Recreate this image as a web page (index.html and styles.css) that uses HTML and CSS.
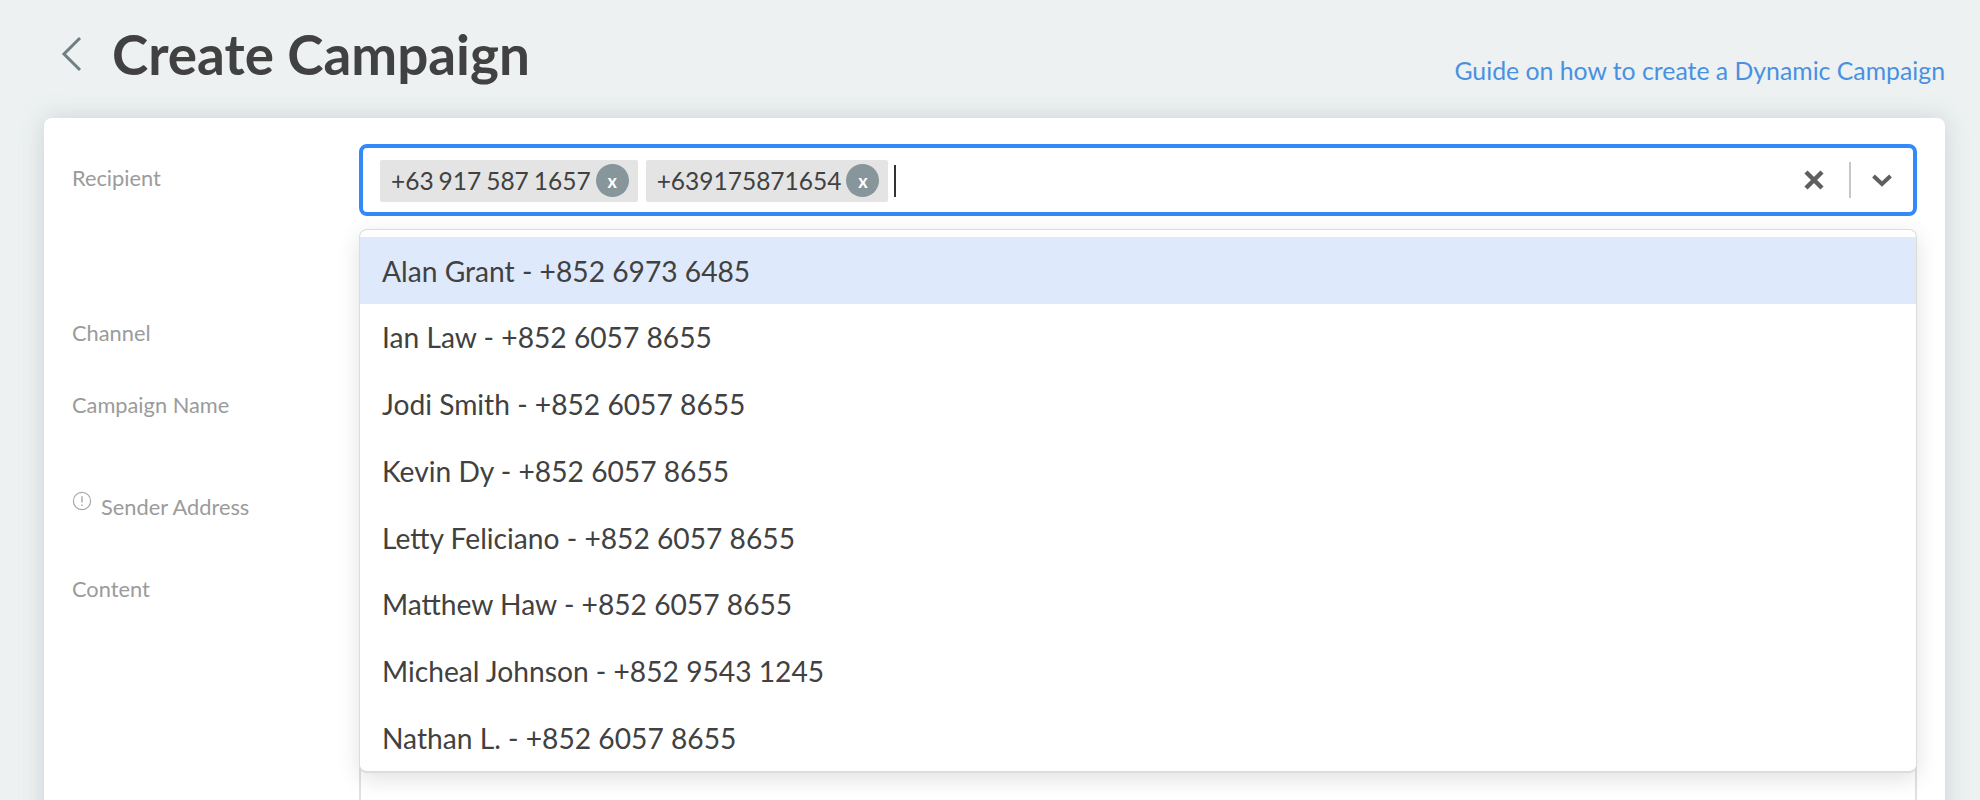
FILE: index.html
```html
<!DOCTYPE html>
<html lang="en">
<head>
<meta charset="utf-8">
<title>Create Campaign</title>
<link rel="stylesheet" href="styles.css">
</head>
<body>
<div class="page">
  <header class="head">
    <div class="head-left">
      <svg class="back" width="24" height="36" viewBox="0 0 24 36"><path d="M20 2 L4 18 L20 34" fill="none" stroke="#6f7f84" stroke-width="3"/></svg>
      <h1 class="title">Create Campaign</h1>
    </div>
    <a class="guide">Guide on how to create a Dynamic Campaign</a>
  </header>
  <main class="card">
    <div class="row row-recipient">
      <div class="label">Recipient</div>
      <div class="field">
        <div class="select">
          <div class="chips">
            <span class="chip">+63 917 587 1657<span class="chip-x">x</span></span>
            <span class="chip">+639175871654<span class="chip-x">x</span></span>
            <span class="caret"></span>
          </div>
          <svg class="clear" width="22" height="22" viewBox="0 0 22 22"><path d="M3 3 L19 19 M19 3 L3 19" stroke="#5f5f5f" stroke-width="4.5" fill="none"/></svg>
          <span class="divider"></span>
          <svg class="chev" width="22" height="14" viewBox="0 0 22 14"><path d="M2.5 3 L11 11 L19.5 3" stroke="#5f5f5f" stroke-width="4" fill="none"/></svg>
        </div>
        <ul class="menu">
          <li class="opt opt-active">Alan Grant - +852 6973 6485</li>
          <li class="opt">Ian Law - +852 6057 8655</li>
          <li class="opt">Jodi Smith - +852 6057 8655</li>
          <li class="opt">Kevin Dy - +852 6057 8655</li>
          <li class="opt">Letty Feliciano - +852 6057 8655</li>
          <li class="opt">Matthew Haw - +852 6057 8655</li>
          <li class="opt">Micheal Johnson - +852 9543 1245</li>
          <li class="opt">Nathan L. - +852 6057 8655</li>
        </ul>
      </div>
    </div>
    <div class="row row-channel"><div class="label">Channel</div></div>
    <div class="row row-name"><div class="label">Campaign Name</div></div>
    <div class="row row-sender">
      <div class="label label-icon">
        <svg class="info" width="20" height="20" viewBox="0 0 20 20"><circle cx="10" cy="10" r="8.6" fill="none" stroke="#a8a8a8" stroke-width="1.2"/><path d="M10 5.2 V11.5 M10 13.6 V15" stroke="#a8a8a8" stroke-width="1.4"/></svg>
        Sender Address
      </div>
    </div>
    <div class="row row-content">
      <div class="label">Content</div>
      <div class="content-box"></div>
    </div>
  </main>
</div>
</body>
</html>
```
FILE: styles.css
```css
* { box-sizing: border-box; }
html, body { margin: 0; height: 100%; }
body {
  background: #edf1f2;
  font-family: Lato, "Liberation Sans", sans-serif;
  color: #414141;
  overflow: hidden;
}
.page { padding: 0 35px 0 44px; height: 800px; overflow: hidden; }
.head { height: 118px; display: flex; justify-content: space-between; }
.head-left { display: flex; align-items: center; height: 108px; padding-left: 16px; }
.back { margin-right: 28px; }
.title { margin: 0; font-size: 54.8px; font-weight: 700; color: #414141; line-height: 1; }
.guide { font-size: 24.8px; color: #4a90e2; margin-top: 55px; line-height: 32px; }
.card {
  background: #fff;
  border-radius: 8px;
  height: 720px;
  padding: 26px 28px 0 28px;
  box-shadow: 0 0 24px rgba(120, 135, 140, .28);
}
.row { display: grid; grid-template-columns: 287px 1fr; }
.label { font-size: 21.8px; color: #9b9b9b; line-height: 26px; padding-top: 21px; }
.label-icon { display: flex; align-items: flex-start; gap: 9px; }
.info { margin-top: -3px; }
.row-recipient { height: 155px; }
.row-channel { height: 72px; }
.row-name { height: 102px; }
.row-sender { height: 82px; }
.row-content { height: 300px; }
.field { position: relative; }
.select {
  height: 72px;
  border: 4px solid #3389fa;
  border-radius: 8px;
  display: flex;
  align-items: center;
  padding: 0 20px 0 17px;
  background: #fff;
}
.chips { flex: 1; display: flex; align-items: center; gap: 8px; padding-top: 1px; }
.chip {
  display: inline-flex;
  align-items: center;
  height: 42px;
  background: #e4e4e4;
  border-radius: 2px;
  padding: 0 9px 0 11px;
  font-size: 24.5px;
  word-spacing: -1.3px;
  color: #414141;
  gap: 5px;
}
.chip-x {
  width: 33px; height: 33px;
  border-radius: 50%;
  background: #87969a;
  color: #fff;
  font-size: 18px;
  font-weight: 700;
  display: flex; align-items: center; justify-content: center;
  line-height: 1;
}
.caret { width: 2px; height: 32px; background: #333; margin-left: -2px; }
.clear { margin-right: 24px; }
.divider { width: 2px; height: 36px; background: #c8c8c8; margin-right: 20px; }
.menu {
  position: absolute;
  left: 0; right: 0;
  top: 85px;
  margin: 0;
  padding: 7px 0 0;
  height: 544px;
  list-style: none;
  background: #fff;
  border-radius: 8px;
  border: 1px solid #dcdcdc;
  border-bottom-width: 2px;
  box-shadow: 0 6px 22px rgba(0, 0, 0, .12);
  z-index: 2;
}
.opt { height: 66.75px; display: flex; align-items: center; padding: 0 22px; font-size: 28.2px; color: #414141; }
.opt-active { height: 67px; background: #deeafb; }
.content-box { border: 2px solid #e1e1e1; height: 300px; grid-column: 2; }
```
